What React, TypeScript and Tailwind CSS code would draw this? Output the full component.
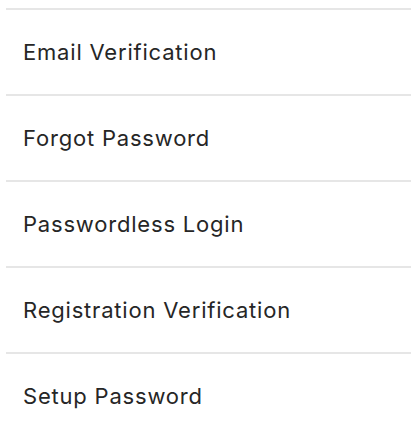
const items = [
  'Email Verification',
  'Forgot Password',
  'Passwordless Login',
  'Registration Verification',
  'Setup Password',
];

export default function App() {
  return (
    <div className="min-h-screen bg-white pt-2 pl-[6px] pr-[1px]" style={{ fontFamily: 'Inter, sans-serif' }}>
      <ul>
        {items.map((item) => (
          <li
            key={item}
            className="flex h-[86px] items-center border-t-2 border-[#e6e6e6] pl-[17px] pt-[1px] text-[22px] tracking-[0.8px] text-[#262626]"
          >
            {item}
          </li>
        ))}
      </ul>
    </div>
  );
}
